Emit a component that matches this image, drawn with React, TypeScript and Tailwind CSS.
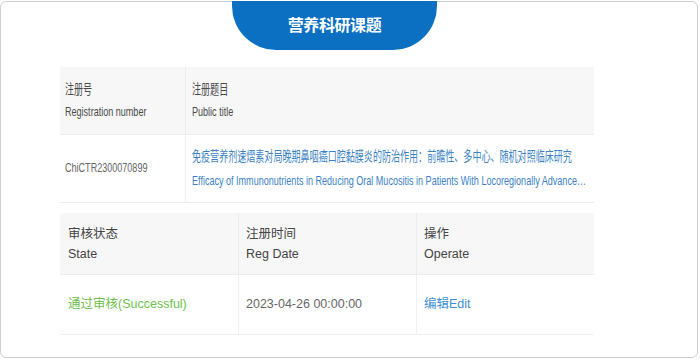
import React from 'react';

const font = { fontFamily: '"Liberation Sans", "Noto Sans CJK SC", sans-serif' };

// narrow text used by the registration table
const Narrow = ({ children, className = '' }: { children: React.ReactNode; className?: string }) => (
  <div className={`origin-left scale-x-[0.67] whitespace-nowrap ${className}`}>{children}</div>
);

export default function App() {
  return (
    <div className="w-[700px] h-[362px] bg-white pt-px overflow-hidden" style={font}>
      <div className="w-[698px] h-[357px] border border-[#cfcfcf] rounded-md flex flex-col">
        {/* Title tab */}
        <div className="-mt-px ml-[231px] w-[205px] h-[49px] bg-[#0b6fc2] rounded-b-[44px] flex items-center justify-center">
          <span className="text-white text-[16px] font-bold tracking-tight">营养科研课题</span>
        </div>

        {/* Registration table */}
        <div className="mt-[17px] ml-[59px] w-[534px] text-[13.5px]">
          <div className="flex h-[68px] bg-[#f7f7f7] border-b border-[#ececec]">
            <div className="w-[126px] shrink-0 pl-[5px] flex flex-col justify-center border-r border-[#ececec] text-[#4a4a4a] leading-[22px] overflow-hidden">
              <Narrow>注册号</Narrow>
              <Narrow>Registration number</Narrow>
            </div>
            <div className="flex-1 min-w-0 pl-[6px] flex flex-col justify-center text-[#4a4a4a] leading-[22px] overflow-hidden">
              <Narrow>注册题目</Narrow>
              <Narrow>Public title</Narrow>
            </div>
          </div>
          <div className="flex h-[68px] bg-white border-b border-[#ececec]">
            <div className="w-[126px] shrink-0 pl-[5px] flex items-center border-r border-[#f0f0f0] text-[#666] overflow-hidden">
              <Narrow>ChiCTR2300070899</Narrow>
            </div>
            <div className="flex-1 min-w-0 pl-[6px] flex flex-col justify-center text-[#3b82c4] leading-[24px] overflow-hidden">
              <Narrow>免疫营养剂速熠素对局晚期鼻咽癌口腔黏膜炎的防治作用：前瞻性、多中心、随机对照临床研究</Narrow>
              <Narrow className="w-[592px] truncate">
                Efficacy of Immunonutrients in Reducing Oral Mucositis in Patients With Locoregionally Advanced Nasopharyngeal Carcinoma
              </Narrow>
            </div>
          </div>
        </div>

        {/* Status table */}
        <div className="mt-[10px] ml-[59px] w-[534px] text-[12.5px]">
          <div className="flex h-[62px] bg-[#f7f7f7] border-b border-[#ececec] text-[#444] leading-[20px]">
            <div className="w-[179px] shrink-0 pl-[8px] flex flex-col justify-center border-r border-[#ececec]">
              <span>审核状态</span>
              <span>State</span>
            </div>
            <div className="w-[178px] shrink-0 pl-[7px] flex flex-col justify-center border-r border-[#ececec]">
              <span>注册时间</span>
              <span>Reg Date</span>
            </div>
            <div className="flex-1 pl-[7px] flex flex-col justify-center">
              <span>操作</span>
              <span>Operate</span>
            </div>
          </div>
          <div className="flex h-[60px] bg-white border-b border-[#f0f0f0]">
            <div className="w-[179px] shrink-0 pl-[8px] flex items-center border-r border-[#f0f0f0] text-[#6cbf4a]">
              通过审核(Successful)
            </div>
            <div className="w-[178px] shrink-0 pl-[7px] flex items-center border-r border-[#f0f0f0] text-[#666]">
              2023-04-26 00:00:00
            </div>
            <div className="flex-1 pl-[7px] flex items-center text-[#3f8fd2]">
              编辑Edit
            </div>
          </div>
        </div>
      </div>
    </div>
  );
}
